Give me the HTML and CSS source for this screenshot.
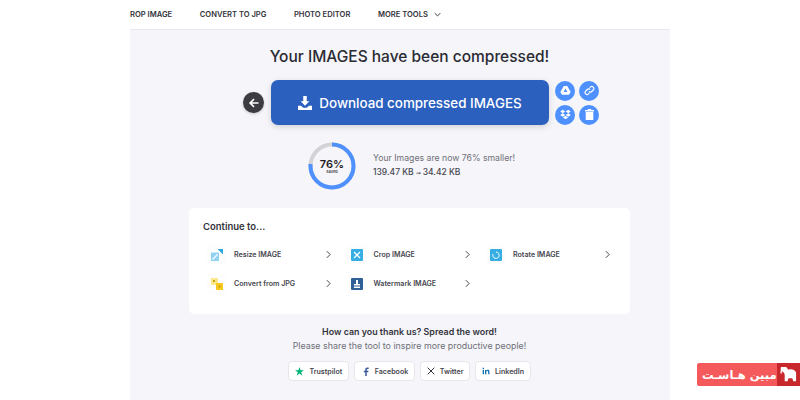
FILE: index.html
```html
<!DOCTYPE html>
<html lang="en">
<head>
    <meta charset="UTF-8">
    <title>Your IMAGES have been compressed!</title>
    <link rel="stylesheet" href="styles.css">
</head>
<body>
    <header class="topbar">
        <nav class="nav">
            <a class="nav-link">ROP IMAGE</a>
            <a class="nav-link">CONVERT TO JPG</a>
            <a class="nav-link">PHOTO EDITOR</a>
            <a class="nav-link">MORE TOOLS
                <svg class="nav-caret" viewBox="0 0 10 6" width="7" height="5"><path d="M1 1l4 4 4-4" fill="none" stroke="#33333b" stroke-width="1.4"/></svg>
            </a>
        </nav>
    </header>

    <main class="main">
        <h1 class="title">Your IMAGES have been compressed!</h1>

        <div class="download-row">
            <button class="back-btn">
                <svg viewBox="0 0 16 16" width="12" height="12"><path d="M14 8H3M8 2.8L2.800 8 8 13.2" fill="none" stroke="#fff" stroke-width="2.2"/></svg>
            </button>
            <button class="download-btn">
                <svg viewBox="0 0 16 16" width="14" height="14"><path d="M6 0h4v6h3L8 11 3 6h3zM0 11h3.500L6 13.500h4l2.500-2.500H16v5H0z" fill="#fff"/></svg>
                Download compressed IMAGES
            </button>
            <div class="side-actions">
                <span class="side-btn">
                    <svg viewBox="0 0 16 16"><path d="M5.500 1.500h5L15.500 10l-2.500 4.300H3L.5 10z M8 5L5.300 10h5.400z" fill="#fff" fill-rule="evenodd"/></svg>
                </span>
                <span class="side-btn">
                    <svg viewBox="0 0 16 16"><path d="M7 9.500a3 3 0 0 0 4.200 0l2.600-2.600a3 3 0 0 0-4.200-4.200L8.300 4M9 6.500a3 3 0 0 0-4.200 0L2.200 9.100a3 3 0 0 0 4.200 4.200L7.700 12" fill="none" stroke="#fff" stroke-width="1.700"/></svg>
                </span>
                <span class="side-btn">
                    <svg viewBox="0 0 16 16"><path d="M4 1l3.700 2.500L4 6 .3 3.500zM12 1l3.700 2.500L12 6 8.300 3.500zM4 6.300l3.700 2.500L4 11.300.3 8.800zM12 6.300l3.700 2.500-3.700 2.500-3.700-2.500zM4.200 12.200L8 9.700l3.800 2.500L8 14.800z" fill="#fff"/></svg>
                </span>
                <span class="side-btn">
                    <svg viewBox="0 0 16 16"><path d="M6 0h4l1 1.500h3.500v2h-13v-2H5zM2.500 4.500h11V16h-11z" fill="#fff"/></svg>
                </span>
            </div>
        </div>

        <div class="saved-row">
            <div class="ring">
                <svg viewBox="0 0 48 48" width="48" height="48">
                    <circle cx="24" cy="24" r="21.500" fill="none" stroke="#d3d3d6" stroke-width="4"/>
                    <circle cx="24" cy="24" r="21.500" fill="none" stroke="#4d90fe" stroke-width="4" stroke-dasharray="102.700 135.100" transform="rotate(-90 24 24)"/>
                </svg>
                <div class="ring-text">
                    <span class="ring-pct">76%</span>
                    <span class="ring-label">SAVED</span>
                </div>
            </div>
            <div class="saved-info">
                <p class="saved-line">Your Images are now 76% smaller!</p>
                <p class="saved-size">139.47 KB<span class="saved-arrow">➞</span>34.42 KB</p>
            </div>
        </div>

        <section class="card">
            <h2 class="card-title">Continue to...</h2>
            <div class="tools">
                <a class="tool">
                    <span class="tool-icon">
                        <svg viewBox="0 0 12 12" width="12" height="12"><path d="M0 3.500h8V12H0z" fill="#8fd2f2"/><path d="M1.500 10.500l5-5" stroke="#fff" stroke-width="1.300"/><path d="M6.500 0H12v5.500z" fill="#2aa7e0"/></svg>
                    </span>
                    <span class="tool-name">Resize IMAGE</span>
                    <svg class="tool-arrow" viewBox="0 0 6 10" width="5" height="9"><path d="M1 1l4 4-4 4" fill="none" stroke="#47474f" stroke-width="1.200"/></svg>
                </a>
                <a class="tool">
                    <span class="tool-icon">
                        <svg viewBox="0 0 12 12" width="12" height="12"><rect width="12" height="12" rx="1" fill="#36aee4"/><path d="M3 3l6 6M9 3L3 9" stroke="#fff" stroke-width="1.300"/></svg>
                    </span>
                    <span class="tool-name">Crop IMAGE</span>
                    <svg class="tool-arrow" viewBox="0 0 6 10" width="5" height="9"><path d="M1 1l4 4-4 4" fill="none" stroke="#47474f" stroke-width="1.200"/></svg>
                </a>
                <a class="tool">
                    <span class="tool-icon">
                        <svg viewBox="0 0 12 12" width="12" height="12"><rect width="12" height="12" rx="1" fill="#36aee4"/><path d="M6 3a3.200 3.200 0 1 1-3 2" fill="none" stroke="#fff" stroke-width="1"/></svg>
                    </span>
                    <span class="tool-name">Rotate IMAGE</span>
                    <svg class="tool-arrow" viewBox="0 0 6 10" width="5" height="9"><path d="M1 1l4 4-4 4" fill="none" stroke="#47474f" stroke-width="1.200"/></svg>
                </a>
                <a class="tool">
                    <span class="tool-icon">
                        <svg viewBox="0 0 12 12" width="12" height="12"><path d="M0 0h7v7H0z" fill="#fbe88a"/><path d="M5 5h7v7H5z" fill="#f8c91e"/><path d="M7.500 7.500h2v2h-2zM2 2h2v2H2z" fill="#c9a20c"/></svg>
                    </span>
                    <span class="tool-name">Convert from JPG</span>
                    <svg class="tool-arrow" viewBox="0 0 6 10" width="5" height="9"><path d="M1 1l4 4-4 4" fill="none" stroke="#47474f" stroke-width="1.200"/></svg>
                </a>
                <a class="tool">
                    <span class="tool-icon">
                        <svg viewBox="0 0 12 12" width="12" height="12"><rect width="12" height="12" rx="1" fill="#2f6196"/><path d="M5 2h2v4h2v1.500H3V6h2zM3 8.500h6V10H3z" fill="#fff"/></svg>
                    </span>
                    <span class="tool-name">Watermark IMAGE</span>
                    <svg class="tool-arrow" viewBox="0 0 6 10" width="5" height="9"><path d="M1 1l4 4-4 4" fill="none" stroke="#47474f" stroke-width="1.200"/></svg>
                </a>
            </div>
        </section>

        <section class="share">
            <p class="share-title">How can you thank us? Spread the word!</p>
            <p class="share-text">Please share the tool to inspire more productive people!</p>
            <div class="share-btns">
                <a class="share-btn">
                    <svg viewBox="0 0 12 12" width="9" height="9"><path d="M6 0l1.500 4.400H12L8.300 7.100 9.700 11.600 6 8.800 2.300 11.600 3.700 7.100 0 4.400h4.500z" fill="#00b67a"/></svg>
                    Trustpilot
                </a>
                <a class="share-btn">
                    <svg class="fb-icon" viewBox="0 0 8 12" width="6" height="9"><path d="M3 12V7H1V5h2V3.500C3 1.500 4 .5 5.800.5H7.500v2H6.300C5.500 2.500 5 3 5 3.700V5h2.300L7 7H5v5z" fill="#3b5a9a"/></svg>
                    Facebook
                </a>
                <a class="share-btn">
                    <svg viewBox="0 0 12 12" width="8" height="8"><path d="M1 1l10 10M11 1L1 11" stroke="#33333b" stroke-width="1.500"/></svg>
                    Twitter
                </a>
                <a class="share-btn">
                    <svg viewBox="0 0 12 12" width="8" height="8"><path d="M1 4.500h2V11H1zM1 1.200h2v2H1zM4.500 4.500h2v1c.5-.8 1.300-1.200 2.200-1.200 1.700 0 2.500 1 2.500 2.900V11h-2V7.500c0-1-.4-1.500-1.200-1.500s-1.500.6-1.500 1.600V11h-2z" fill="#1273b5"/></svg>
                    LinkedIn
                </a>
            </div>
        </section>
    </main>

    <div class="host-badge">
        <span class="host-name" dir="rtl">مبین هـاسـت</span>
        <span class="host-logo">
            <svg viewBox="0 0 20 20" width="19" height="19"><path d="M2 2h5c1 0 1.800.8 2.500 3 3-1 7-.5 8.500 3v9h-3l-1-3H10l-1 3H6V10C5.500 8.500 4.500 7 3 6.500V9H1.500z" fill="#fff"/></svg>
        </span>
    </div>
</body>
</html>
```

FILE: styles.css
```css
* {
    margin: 0;
    padding: 0;
    box-sizing: border-box;
    font-family: 'Inter', 'Noto Sans', sans-serif;
}

body {
    height: 400px;
    background: #fff;
    overflow: hidden;
    position: relative;
    color: #33333b;
}

.topbar {
    height: 29px;
    padding-left: 130px;
}

.nav {
    display: flex;
    gap: 27.500px;
    height: 28px;
    align-items: center;
}

.nav-link {
    font-size: 7.600px;
    font-weight: 600;
    color: #33333b;
    display: flex;
    align-items: center;
    gap: 6px;
    white-space: nowrap;
}

.main {
    width: 540px;
    height: 371px;
    margin: 0 auto;
    background: #f5f5fa;
    border-top: 1px solid #e9e9f0;
    padding-top: 16px;
}

.title {
    font-size: 15.500px;
    font-weight: 500;
    text-align: center;
    line-height: 22px;
    color: #2b2b33;
    padding-left: 19px;
}

.download-row {
    display: flex;
    align-items: center;
    margin-top: 12px;
    padding-left: 113px;
}

.back-btn {
    width: 21px;
    height: 21px;
    border-radius: 50%;
    border: none;
    background: #3b3b41;
    display: flex;
    align-items: center;
    justify-content: center;
    margin-right: 7px;
    box-shadow: 0 1px 3px rgba(0, 0, 0, 0.2);
}

.download-btn {
    width: 278px;
    height: 45px;
    border: none;
    border-radius: 7px;
    background: #2b60bf;
    color: #fff;
    font-size: 13.400px;
    font-weight: 500;
    display: flex;
    align-items: center;
    justify-content: center;
    gap: 7px;
    box-shadow: 0 2px 6px rgba(0, 0, 0, 0.15);
}

.side-actions {
    display: grid;
    grid-template-columns: 20px 20px;
    gap: 4px;
    margin-left: 6px;
}

.side-btn {
    width: 20px;
    height: 20px;
    border-radius: 50%;
    background: #4d90fe;
    display: flex;
    align-items: center;
    justify-content: center;
}

.side-btn svg {
    width: 11px;
    height: 11px;
}

.saved-row {
    display: flex;
    align-items: center;
    gap: 17px;
    margin-top: 17px;
    padding-left: 178px;
}

.ring {
    position: relative;
    width: 48px;
    height: 48px;
}

.ring-text {
    position: absolute;
    inset: 0;
    display: flex;
    flex-direction: column;
    align-items: center;
    justify-content: center;
}

.ring-pct {
    font-size: 11px;
    font-weight: 600;
    line-height: 12px;
    color: #1c1c22;
}

.ring-label {
    font-size: 3.500px;
    font-weight: 600;
    line-height: 5px;
}

.saved-info {
    padding-bottom: 2px;
}

.saved-line {
    font-size: 8.700px;
    color: #707078;
    line-height: 13px;
}

.saved-size {
    font-size: 8.500px;
    font-weight: 500;
    color: #47474f;
    line-height: 13px;
    margin-top: 1px;
}

.saved-arrow {
    font-size: 6px;
    margin: 0 2px;
}

.card {
    width: 441px;
    height: 106px;
    margin: 18px 0 0 59px;
    background: #fff;
    border-radius: 5px;
    padding: 13px 14px;
}

.card-title {
    font-size: 9.500px;
    font-weight: 600;
    line-height: 12px;
    color: #33333b;
}

.tools {
    display: grid;
    grid-template-columns: repeat(3, 139.500px);
    grid-auto-rows: 29px;
    margin-top: 7px;
}

.tool {
    display: flex;
    align-items: center;
    padding-left: 8px;
    padding-right: 12px;
}

.tool-icon {
    width: 12px;
    height: 12px;
    display: flex;
    margin-right: 11px;
    border-radius: 1px;
    box-shadow: 0 0 0 4px #fdfdfe;
}

.tool-name {
    flex: 1;
    font-size: 7.100px;
    font-weight: 600;
    color: #47474f;
}

.share {
    margin-top: 11px;
    padding-left: 19px;
    text-align: center;
}

.share-title {
    font-size: 8.900px;
    font-weight: 600;
    line-height: 13px;
    color: #33333b;
}

.share-text {
    font-size: 8.900px;
    color: #707078;
    line-height: 13px;
    margin-top: 1px;
}

.share-btns {
    display: flex;
    justify-content: center;
    gap: 5px;
    margin-top: 9px;
}

.share-btn {
    height: 20px;
    padding: 0 5.500px 0 6px;
    background: #fff;
    border: 1px solid #e6e6ec;
    border-radius: 4px;
    font-size: 7.100px;
    font-weight: 600;
    color: #47474f;
    display: flex;
    align-items: center;
    gap: 5px;
}

.fb-icon {
    margin: 0 1px 0 2px;
}

/* badge sits over the page corner */
.host-badge {
    position: absolute;
    left: 697px;
    top: 363px;
    width: 103px;
    height: 23px;
    background: #f4595b;
    border-radius: 2px 0 0 2px;
    display: flex;
    align-items: center;
    justify-content: space-between;
    overflow: hidden;
}

.host-name {
    font-family: 'DejaVu Sans', sans-serif;
    font-size: 11.500px;
    font-weight: 700;
    color: #fff;
    padding-left: 5px;
    white-space: nowrap;
}

.host-logo {
    flex-shrink: 0;
    width: 23px;
    height: 23px;
    background: #c8282c;
    display: flex;
    align-items: center;
    justify-content: center;
}
```
